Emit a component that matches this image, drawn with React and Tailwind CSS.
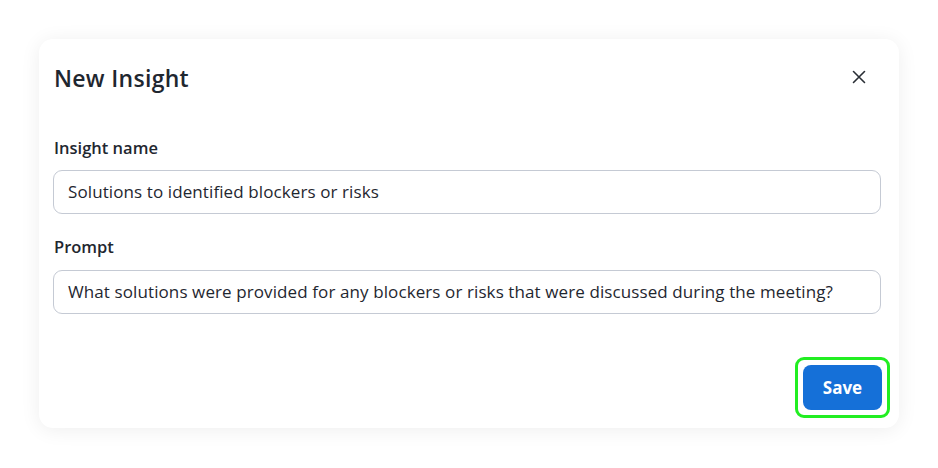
import React from "react";

export default function App() {
  return (
    <div className="w-[938px] h-[468px] bg-white pt-[39px] pl-[39px] font-['Open_Sans',sans-serif] text-[#1f2730]">
      <div className="w-[860px] h-[389px] bg-white rounded-[14px] shadow-[0_2px_20px_rgba(0,0,0,0.07)] pl-[14px] pr-[18px] flex flex-col">
        <div className="flex items-center justify-between h-[78px]">
          <h1 className="text-[23px] font-semibold pl-[1px] tracking-[0.3px]">New Insight</h1>
          <button className="w-[24px] h-[24px] mr-[10px] mb-[2px] flex items-center justify-center text-[#2a2f36]">
            <svg width="14" height="14" viewBox="0 0 14 14" fill="none" stroke="currentColor" strokeWidth="1.6" strokeLinecap="round">
              <path d="M1.5 1.5L12.5 12.5M12.5 1.5L1.5 12.5" />
            </svg>
          </button>
        </div>
        <div className="text-[16.5px] font-semibold leading-[20px] pl-[1px] mt-[21px]">Insight name</div>
        <div className="mt-[12px] h-[44px] border border-[#c5cad4] rounded-[9px] flex items-center px-[14px] text-[17px] tracking-[0.1px]">
          Solutions to identified blockers or risks
        </div>
        <div className="text-[16.5px] font-semibold leading-[20px] pl-[1px] mt-[23px]">Prompt</div>
        <div className="mt-[13px] h-[44px] border border-[#c5cad4] rounded-[9px] flex items-center px-[14px] text-[17px] tracking-[0.1px]">
          What solutions were provided for any blockers or risks that were discussed during the meeting?
        </div>
        <div className="flex justify-end mt-[43px]">
          <div className="p-[5px] border-[3px] border-[#22ee22] rounded-[9px] -mr-[9px]">
            <button className="w-[79px] h-[45px] bg-[#1570d8] text-white rounded-[8px] text-[17px] font-bold">
              Save
            </button>
          </div>
        </div>
      </div>
    </div>
  );
}
